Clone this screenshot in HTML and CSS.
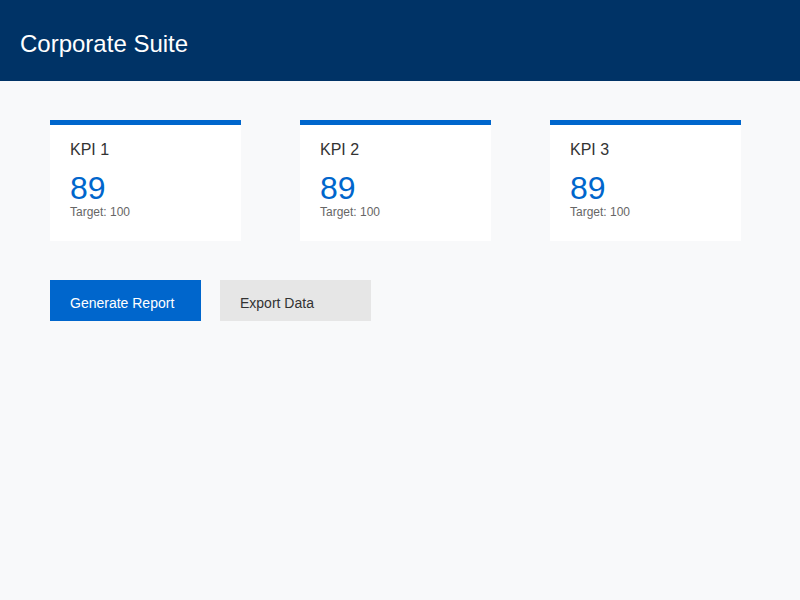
FILE: index.html
```html
<!DOCTYPE html>
<html>
<head>
<meta charset="utf-8">
<link rel="stylesheet" href="styles.css">
</head>
<body>
<header class="header"><h1 class="title">Corporate Suite</h1></header>
<main class="main">
  <section class="kpis">
    <div class="card"><div class="card-label">KPI 1</div><div class="card-value">89</div><div class="card-target">Target: 100</div></div>
    <div class="card"><div class="card-label">KPI 2</div><div class="card-value">89</div><div class="card-target">Target: 100</div></div>
    <div class="card"><div class="card-label">KPI 3</div><div class="card-value">89</div><div class="card-target">Target: 100</div></div>
  </section>
  <div class="actions">
    <button class="btn btn-primary">Generate Report</button>
    <button class="btn btn-secondary">Export Data</button>
  </div>
</main>
</body>
</html>
```
FILE: styles.css
```css
html, body { margin: 0; padding: 0; }
body {
  background: #f8f9fa;
  font-family: "Liberation Sans", Arial, sans-serif;
  color: #333;
  width: 800px;
  height: 600px;
}
.header {
  background: #003366;
  height: 81px;
  display: flex;
  align-items: center;
  padding: 6px 20px 0;
  box-sizing: border-box;
}
.title {
  margin: 0;
  font-size: 24px;
  font-weight: normal;
  color: #fff;
}
.main { padding: 39px 50px; }
.kpis { display: flex; gap: 59px; }
.card {
  width: 191px;
  height: 121px;
  box-sizing: border-box;
  background: #fff;
  border-top: 5px solid #0066cc;
  padding: 15px 20px;
}
.card-label { font-size: 16px; line-height: 20px; color: #333; }
.card-value { font-size: 32px; line-height: 36px; color: #0066cc; margin-top: 10px; }
.card-target { font-size: 12px; line-height: 14px; color: #666; margin-top: -1px; }
.actions { display: flex; gap: 19px; margin-top: 39px; }
.btn {
  width: 151px;
  height: 41px;
  border: none;
  font-family: "Liberation Sans", Arial, sans-serif;
  font-size: 14px;
  text-align: left;
  padding: 4px 20px 0;
  margin: 0;
}
.btn-primary { background: #0066cc; color: #fff; }
.btn-secondary { background: #e6e6e6; color: #333; }
```
